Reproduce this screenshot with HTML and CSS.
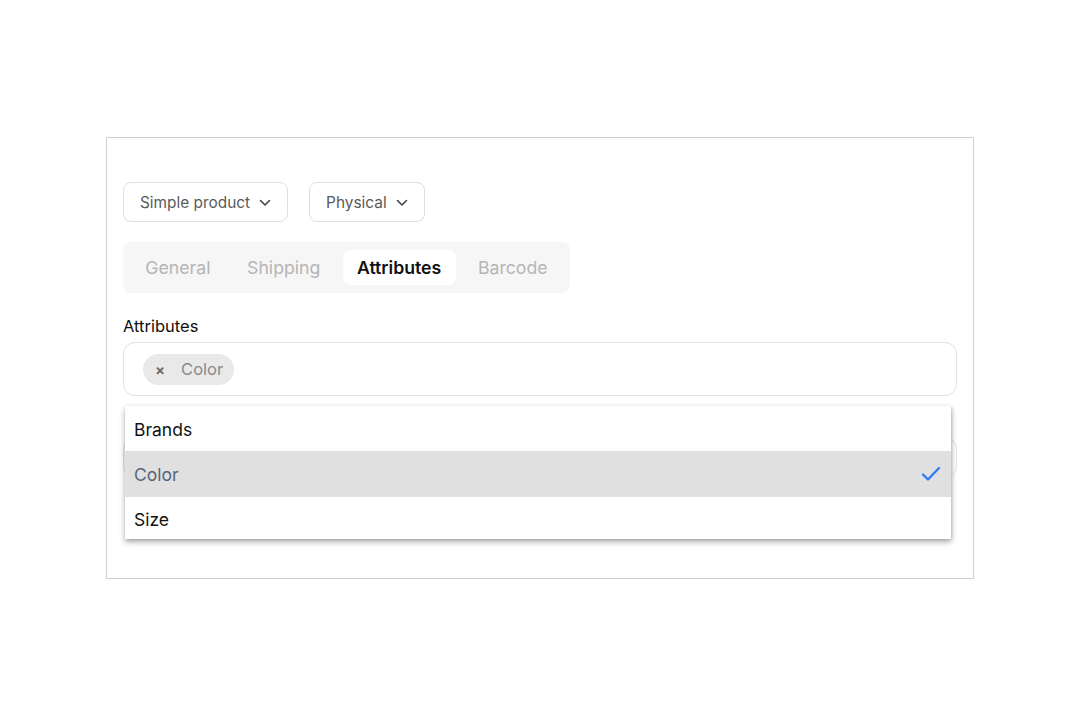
FILE: index.html
```html
<!DOCTYPE html>
<html>
<head>
<meta charset="utf-8">
<link rel="stylesheet" href="styles.css">
</head>
<body>
<div class="page">
  <div class="card">
    <div class="selects">
      <button class="select">Simple product
        <svg width="12" height="8" viewBox="0 0 12 8"><path d="M1.5 1.5 L6 6 L10.5 1.5" fill="none" stroke="#444" stroke-width="1.6" stroke-linecap="round" stroke-linejoin="round"/></svg>
      </button>
      <button class="select">Physical
        <svg width="12" height="8" viewBox="0 0 12 8"><path d="M1.5 1.5 L6 6 L10.5 1.5" fill="none" stroke="#444" stroke-width="1.6" stroke-linecap="round" stroke-linejoin="round"/></svg>
      </button>
    </div>
    <div class="tabs">
      <div class="tab">General</div>
      <div class="tab">Shipping</div>
      <div class="tab active">Attributes</div>
      <div class="tab">Barcode</div>
    </div>
    <div class="field">
      <label class="label">Attributes</label>
      <div class="input">
        <span class="chip"><span class="chip-x">×</span><span class="chip-text">Color</span></span>
      </div>
      <div class="menu">
        <div class="option">Brands</div>
        <div class="option selected">Color
          <svg width="20" height="16" viewBox="0 0 20 16"><path d="M2 8.5 L7 13.5 L18 2" fill="none" stroke="#2f7cf6" stroke-width="2.4" stroke-linecap="round" stroke-linejoin="round"/></svg>
        </div>
        <div class="option">Size</div>
      </div>
    </div>
    <div class="field second">
      <div class="input small"></div>
    </div>
  </div>
</div>
</body>
</html>
```
FILE: styles.css
```css
* { box-sizing: border-box; }
html, body { margin: 0; padding: 0; background: #fff; }
body { font-family: Inter, "Noto Sans", sans-serif; color: #111; }
.page { padding: 137px 0 0 106px; }
.card {
  width: 868px;
  height: 442px;
  border: 1px solid #cfcfcf;
  padding: 44px 16px 0 16px;
  display: flex;
  flex-direction: column;
  align-items: flex-start;
}
.selects { display: flex; gap: 21px; }
.select {
  font-family: inherit;
  height: 40px;
  padding: 0 16px 0 16px;
  background: #fff;
  border: 1px solid #dedede;
  border-radius: 8px;
  font-size: 15.4px;
  color: #5a5a5a;
  display: flex;
  align-items: center;
  gap: 9px;
}
.select svg { margin-top: 1px; }
.tabs {
  margin-top: 20px;
  background: #f6f6f6;
  border-radius: 8px;
  padding: 8px;
  display: flex;
  gap: 8px;
}
.tab {
  height: 35px;
  padding: 0 14.3px;
  display: flex;
  align-items: center;
  font-size: 17.7px;
  color: #b5b5b5;
  border-radius: 8px;
}
.tab.active { background: #fff; color: #111; font-weight: 600; }
.field { position: relative; width: 100%; margin-top: 24px; }
.label { display: block; font-size: 16.5px; color: #111; line-height: 18px; }
.input {
  margin-top: 7px;
  height: 54px;
  border: 1px solid #e2e2e2;
  border-radius: 12px;
  display: flex;
  align-items: center;
  padding: 0 19px;
}
.input.small { height: 41px; margin-top: 0; }
.chip {
  height: 31px;
  background: #e9e9e9;
  border-radius: 16px;
  display: flex;
  align-items: center;
  padding: 0 11px 0 12px;
  font-size: 16.5px;
}
.chip-x { color: #666; font-size: 15px; margin-right: 16px; font-weight: 600; }
.chip-text { color: #8a8a8a; }
.field.second { margin-top: 41px; }
.menu {
  position: absolute;
  left: 2px;
  right: 6px;
  top: 89px;
  background: #fff;
  box-shadow: 0 3px 6px rgba(0,0,0,0.3), 1px 1px 3px rgba(0,0,0,0.15);
  z-index: 5;
}
.option {
  height: 45px;
  display: flex;
  align-items: center;
  justify-content: space-between;
  padding: 2px 10px 0 9px;
  font-size: 17.5px;
  color: #111;
}
.option.selected { background: #e0e0e0; color: #55657a; height: 46px; padding-top: 0; }
.option:last-child { height: 42px; }
```
